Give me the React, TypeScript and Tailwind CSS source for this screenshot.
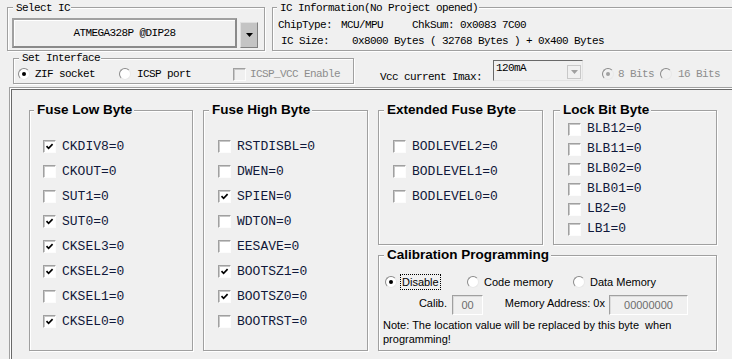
import React from "react";

const sim = "font-['Liberation_Mono',monospace] text-[11px] tracking-[-0.6px] leading-[12px] whitespace-pre";
const ui = "font-['Liberation_Sans',Arial,sans-serif] text-[11px]";
const bold = "font-['Liberation_Sans',Arial,sans-serif] font-bold text-[13.5px] leading-[16px] -mt-[9px] pl-[3px] pr-[2px]";
const fuseText = "font-['Liberation_Mono',monospace] text-[13px] leading-[16px] text-[#10183a] whitespace-pre";

const lowFuses: [string, boolean][] = [
  ["CKDIV8=0", true],
  ["CKOUT=0", false],
  ["SUT1=0", false],
  ["SUT0=0", true],
  ["CKSEL3=0", true],
  ["CKSEL2=0", true],
  ["CKSEL1=0", false],
  ["CKSEL0=0", true],
];
const highFuses: [string, boolean][] = [
  ["RSTDISBL=0", false],
  ["DWEN=0", false],
  ["SPIEN=0", true],
  ["WDTON=0", false],
  ["EESAVE=0", false],
  ["BOOTSZ1=0", true],
  ["BOOTSZ0=0", true],
  ["BOOTRST=0", false],
];
const extFuses = ["BODLEVEL2=0", "BODLEVEL1=0", "BODLEVEL0=0"];
const lockBits = ["BLB12=0", "BLB11=0", "BLB02=0", "BLB01=0", "LB2=0", "LB1=0"];

function Group({
  title,
  titleClass,
  className,
  children,
}: {
  title: string;
  titleClass: string;
  className: string;
  children?: React.ReactNode;
}) {
  return (
    <div className={`border border-[#a0a0a0] shadow-[inset_1px_1px_0_#fff,1px_1px_0_#fff] ${className}`}>
      <div className={`w-fit bg-[#f0f0f0] ${titleClass}`}>{title}</div>
      {children}
    </div>
  );
}

function CheckBox({ checked = false, disabled = false }: { checked?: boolean; disabled?: boolean }) {
  return (
    <span
      className={`flex items-center justify-center w-[13px] h-[13px] shrink-0 border border-t-[#a0a0a0] border-l-[#a0a0a0] border-r-[#fcfcfc] border-b-[#fcfcfc] shadow-[inset_1px_1px_0_#c8c8c8] ${
        disabled ? "bg-[#f0f0f0]" : "bg-white"
      }`}
    >
      {checked && (
        <svg width="9" height="9" viewBox="0 0 9 9">
          <path d="M1.5 4.2 L3.6 6.3 L7.6 2.2" fill="none" stroke="#000" strokeWidth="1.7" />
        </svg>
      )}
    </span>
  );
}

function Radio({ on = false, disabled = false }: { on?: boolean; disabled?: boolean }) {
  return (
    <span
      className={`flex items-center justify-center w-[12px] h-[12px] shrink-0 rounded-full border border-t-[#8a8a8a] border-l-[#8a8a8a] border-r-[#e8e8e8] border-b-[#e8e8e8] ${
        disabled ? "bg-[#f0f0f0]" : "bg-white"
      }`}
    >
      {on && <span className={`w-[4px] h-[4px] rounded-full ${disabled ? "bg-[#a0a0a0]" : "bg-black"}`} />}
    </span>
  );
}

function FuseRow({ label, checked, rowClass }: { label: string; checked: boolean; rowClass: string }) {
  return (
    <div className={`flex items-center ${rowClass}`}>
      <CheckBox checked={checked} />
      <span className={`ml-[6px] ${fuseText}`}>{label}</span>
    </div>
  );
}

function Field({ className, children }: { className: string; children?: React.ReactNode }) {
  return (
    <div
      className={`flex items-center justify-center bg-[#f0f0f0] border border-t-[#a0a0a0] border-l-[#a0a0a0] border-r-white border-b-white shadow-[inset_1px_1px_0_#dcdcdc] text-[#6d6d6d] ${ui} ${className}`}
    >
      {children}
    </div>
  );
}

export default function App() {
  return (
    <div className="w-[732px] h-[359px] overflow-hidden bg-[#f0f0f0] text-black">
      {/* header row */}
      <div className="flex pt-[7px] pl-[7px]">
        <Group title="Select IC" className="w-[258px] h-[44px] shrink-0" titleClass={`${sim} -mt-[6px] ml-[5px] pl-[3px] pr-[1px]`}>
          <div className="flex mt-[4px] ml-[4px]">
            <div
              className={`w-[225px] h-[30px] flex items-center justify-center bg-[#f0f0f0] border-2 border-t-[#a0a0a0] border-l-[#a0a0a0] border-r-[#8a8a8a] border-b-[#8a8a8a] shadow-[inset_1px_1px_0_#fff] ${sim}`}
            >
              ATMEGA328P @DIP28
            </div>
            <div className="ml-[3px] mt-[4px] w-[18px] h-[26px] flex items-center justify-center bg-[#c4c4c4] border border-t-[#e0e0e0] border-l-[#e0e0e0] border-r-[#808080] border-b-[#808080]">
              <svg width="7" height="4" viewBox="0 0 7 4">
                <path d="M0 0h7L3.5 4z" fill="#000" />
              </svg>
            </div>
          </div>
        </Group>

        <Group
          title="IC Information(No Project opened)"
          className="ml-[7px] w-[480px] h-[44px] shrink-0"
          titleClass={`${sim} -mt-[6px] ml-[4px] pl-[3px] pr-[1px]`}
        >
          <div className={`${sim} leading-[16px] mt-[3px]`}>
            <div className="flex pl-[5px]">
              <span className="w-[63px]">ChipType:</span>
              <span className="w-[71px]">MCU/MPU</span>
              <span className="w-[48px]">ChkSum:</span>
              <span>0x0083 7C00</span>
            </div>
            <div className="flex pl-[8px]">
              <span className="w-[71px]">IC Size:</span>
              <span>0x8000 Bytes ( 32768 Bytes ) + 0x400 Bytes</span>
            </div>
          </div>
        </Group>
      </div>

      {/* interface row */}
      <div className="flex items-start mt-[7px]">
        <Group
          title="Set Interface"
          className="ml-[13px] w-[341px] h-[26px] shrink-0"
          titleClass={`${sim} -mt-[7px] ml-[5px] pl-[3px] pr-[1px]`}
        >
          <div className={`flex items-center mt-[4px] h-[12px] pl-[4px] ${sim}`}>
            <div className="flex items-center w-[101px]">
              <Radio on />
              <span className="ml-[5px]">ZIF socket</span>
            </div>
            <div className="flex items-center w-[114px]">
              <Radio />
              <span className="ml-[6px]">ICSP port</span>
            </div>
            <div className="flex items-center text-[#8d8d8d]">
              <CheckBox disabled />
              <span className="ml-[4px]">ICSP_VCC Enable</span>
            </div>
          </div>
        </Group>

        <div className={`${sim} ml-[26px] mt-[13px] w-[113px] shrink-0`}>Vcc current Imax:</div>
        <div className="mt-[2px] w-[90px] h-[21px] shrink-0 flex items-start bg-[#f0f0f0] border border-t-[#696969] border-l-[#696969] border-r-[#e3e3e3] border-b-[#e3e3e3]">
          <span className={`${sim} pl-[2px] pt-[1px]`}>120mA</span>
          <div className="ml-auto mt-[4px] mr-[1px] w-[14px] h-[14px] flex items-center justify-center bg-[#f0f0f0] border border-[#c8c8c8]">
            <svg width="7" height="4" viewBox="0 0 7 4">
              <path d="M0 0h7L3.5 4z" fill="#a0a0a0" />
            </svg>
          </div>
        </div>
        <div className={`ml-[19px] mt-[10px] flex items-center w-[58px] shrink-0 text-[#8d8d8d] ${sim}`}>
          <Radio on disabled />
          <span className="ml-[4px]">8 Bits</span>
        </div>
        <div className={`mt-[10px] flex items-center shrink-0 text-[#8d8d8d] ${sim}`}>
          <Radio disabled />
          <span className="ml-[6px]">16 Bits</span>
        </div>
      </div>

      {/* fuse panel */}
      <div className="mt-[3px] ml-[9px] h-[300px] border-t border-l border-[#a0a0a0]">
        <div className="h-full border-t border-l border-white">
          <div className="h-full border-t border-l border-[#696969] flex items-start pl-[17px] pt-[20px] gap-[10px]">
            <Group title="Fuse Low Byte" className="w-[164px] h-[241px] shrink-0" titleClass={`${bold} ml-[4px]`}>
              <div className="mt-[16px]">
                {lowFuses.map(([l, c]) => (
                  <FuseRow key={l} label={l} checked={c} rowClass="h-[25px] pl-[13px]" />
                ))}
              </div>
            </Group>

            <Group title="Fuse High Byte" className="w-[165px] h-[241px] shrink-0" titleClass={`${bold} ml-[5px]`}>
              <div className="mt-[16px]">
                {highFuses.map(([l, c]) => (
                  <FuseRow key={l} label={l} checked={c} rowClass="h-[25px] pl-[14px]" />
                ))}
              </div>
            </Group>

            <div className="w-[339px] shrink-0 flex flex-col">
              <div className="flex gap-[10px]">
                <Group title="Extended Fuse Byte" className="w-[165px] h-[135px] shrink-0" titleClass={`${bold} ml-[5px]`}>
                  <div className="mt-[16px]">
                    {extFuses.map((l) => (
                      <FuseRow key={l} label={l} checked={false} rowClass="h-[25px] pl-[14px]" />
                    ))}
                  </div>
                </Group>
                <Group title="Lock Bit Byte" className="w-[164px] h-[135px] shrink-0" titleClass={`${bold} ml-[6px]`}>
                  <div className="mt-[1px]">
                    {lockBits.map((l) => (
                      <FuseRow key={l} label={l} checked={false} rowClass="h-[20px] pl-[14px]" />
                    ))}
                  </div>
                </Group>
              </div>

              <Group title="Calibration Programming" className="mt-[10px] w-[339px] h-[96px]" titleClass={`${bold} ml-[5px]`}>
                <div className={`flex items-center mt-[11px] h-[16px] pl-[6px] ${ui}`}>
                  <div className="flex items-center w-[82px]">
                    <Radio on />
                    <span className="ml-[3px] px-[1px] leading-[14px] border border-dotted border-black">Disable</span>
                  </div>
                  <div className="flex items-center w-[106px]">
                    <Radio />
                    <span className="ml-[5px]">Code memory</span>
                  </div>
                  <div className="flex items-center">
                    <Radio />
                    <span className="ml-[5px]">Data Memory</span>
                  </div>
                </div>

                <div className={`flex items-start mt-[5px] h-[20px] ${ui}`}>
                  <span className="w-[73px] text-right pr-[5px] mt-[1px] leading-[14px]">Calib.</span>
                  <Field className="w-[31px] h-[20px]">00</Field>
                  <span className="w-[126px] text-right pr-[4px] mt-[1px] leading-[14px]">Memory Address: 0x</span>
                  <Field className="w-[79px] h-[20px]">00000000</Field>
                </div>

                <div className={`mt-[3px] pl-[4px] leading-[14px] ${ui}`}>
                  Note: The location value will be replaced by this byte{"\u00a0"} when
                  <br />
                  programming!
                </div>
              </Group>
            </div>
          </div>
        </div>
      </div>
    </div>
  );
}
